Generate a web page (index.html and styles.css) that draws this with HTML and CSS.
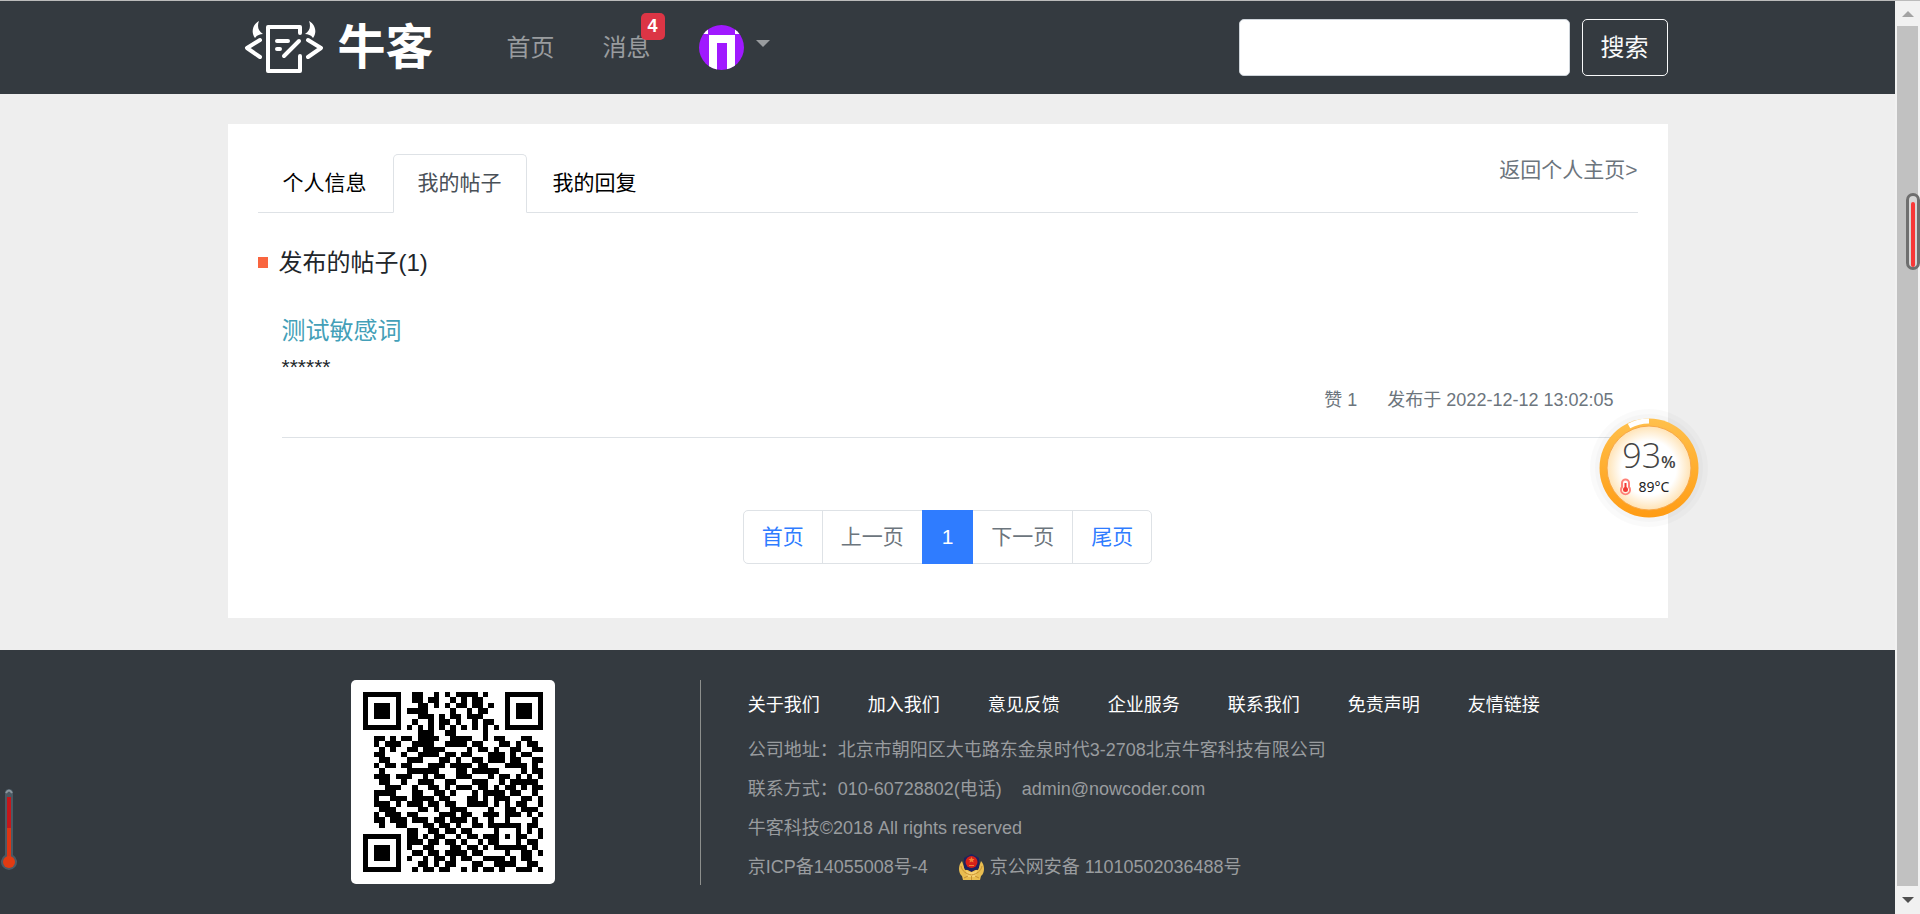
FILE: index.html
```html
<!DOCTYPE html>
<html lang="zh-CN">
<head>
<meta charset="utf-8">
<meta name="viewport" content="width=device-width, initial-scale=1">
<title>牛客 - 我的帖子</title>
<link rel="stylesheet" href="styles.css">
</head>
<body>
<div class="page">
  <header class="site-header">
    <div class="container header-row">
      <a class="brand" href="#">
        <svg class="brand-mark" viewBox="0 0 80 56" aria-hidden="true">
          <g fill="none" stroke="#fff" stroke-width="4" stroke-linecap="round" stroke-linejoin="round">
            <path d="M16 20 3 28l13 9M64 20l13 8-13 9"/>
            <path d="M56 13V7H24v44h32V36"/>
            <path d="M33 21h11M33 29h3M55 21 40 36"/>
          </g>
          <path fill="#fff" d="M15 1C8 5 7 13 11 18c2-3 5-4 8-4-5-3-6-8-4-13zM65 1c7 4 8 12 4 17-2-3-5-4-8-4 5-3 6-8 4-13z"/>
        </svg>
        <span class="brand-name">牛客</span>
      </a>
      <nav class="main-nav">
        <a href="#">首页</a>
        <a class="messages" href="#">消息<span class="badge">4</span></a>
        <button class="user-menu" type="button" aria-label="用户菜单">
          <svg class="avatar" viewBox="0 0 45 45" aria-hidden="true">
            <defs><clipPath id="round"><circle cx="22.5" cy="22.5" r="22.5"/></clipPath></defs>
            <g clip-path="url(#round)"><path fill="#a019ff" d="M0 0h45v45H0z"/><path fill="#fff" d="M0 0h9v9H0zM36 0h9v9h-9zM10 10h26v35h-8V18H18v27h-8z"/></g>
          </svg>
          <span class="caret"></span>
        </button>
      </nav>
      <form class="search">
        <input type="text" aria-label="搜索内容">
        <button type="button">搜索</button>
      </form>
    </div>
  </header>

  <main class="container card">
    <div class="tab-bar">
      <nav class="tabs">
        <a href="#">个人信息</a>
        <a class="active" href="#">我的帖子</a>
        <a href="#">我的回复</a>
      </nav>
      <a class="back" href="#">返回个人主页&gt;</a>
    </div>
    <h1 class="section-title">发布的帖子(1)</h1>
    <ul class="posts">
      <li>
        <a class="post-title" href="#">测试敏感词</a>
        <p class="post-text">******</p>
        <p class="post-meta"><span>赞 1</span><span>发布于 2022-12-12 13:02:05</span></p>
      </li>
    </ul>
    <nav class="pagination" aria-label="分页">
      <a href="#">首页</a>
      <span>上一页</span>
      <a class="current" href="#">1</a>
      <span>下一页</span>
      <a href="#">尾页</a>
    </nav>
  </main>

  <footer class="site-footer">
    <div class="container footer-row">
      <div class="qr-column">
        <svg class="qr" id="qr" viewBox="0 0 33 33" role="img" aria-label="二维码"></svg>
      </div>
      <div class="footer-info">
        <nav class="footer-links">
          <a href="#">关于我们</a><a href="#">加入我们</a><a href="#">意见反馈</a><a href="#">企业服务</a><a href="#">联系我们</a><a href="#">免责声明</a><a href="#">友情链接</a>
        </nav>
        <p>公司地址：北京市朝阳区大屯路东金泉时代3-2708北京牛客科技有限公司</p>
        <p class="contact"><span>联系方式：010-60728802(电话)</span><span>admin@nowcoder.com</span></p>
        <p>牛客科技©2018 All rights reserved</p>
        <p class="licence"><span>京ICP备14055008号-4</span>
          <span class="police">
            <svg viewBox="0 0 25 27" aria-hidden="true">
              <path fill="#e9bd50" d="M3 7C-1 11-1 19 3 22l1 4h17l1-4c4-3 4-11 0-15l-3 9H6z"/>
              <path fill="#1d2160" d="M5 4 12.500 0 20 4v10l-7.500 4L5 14z"/>
              <circle cx="12.5" cy="8" r="6" fill="#d62018"/>
              <path fill="#ef7f35" d="m12.500 3 1 2h2L14 6.500l.5 2-2-1-2 1 .5-2L9.500 5h2zM10 11h5v1h-5z"/>
              <path fill="#f6d070" d="M7 16c3 3 8 3 11 0l-1 7H8z"/>
              <path fill="none" stroke="#c8902f" d="M2 12c1 5 5 8 10.500 9 5.500-1 9.500-4 10.500-9M5 24l4-2M20 24l-4-2M12.500 22v4"/>
            </svg>
            京公网安备 11010502036488号</span></p>
      </div>
    </div>
  </footer>
</div>

<div class="scrollbar" aria-hidden="true">
  <span class="arrow up"></span><span class="thumb"></span><span class="arrow down"></span>
</div>

<div class="monitor">
  <svg viewBox="0 0 120 120" aria-hidden="true">
    <defs>
      <linearGradient id="ring" x2="0" y2="1"><stop offset="0" stop-color="#ffc04c"/><stop offset="1" stop-color="#ff9c14"/></linearGradient>
      <radialGradient id="face"><stop offset=".65" stop-color="#fff"/><stop offset="1" stop-color="#ffe3b5"/></radialGradient>
    </defs>
    <circle cx="60" cy="60" r="59" fill="#000" opacity=".02"/>
    <circle cx="60" cy="60" r="54" fill="#000" opacity=".02"/>
    <circle cx="60" cy="60" r="49.500" fill="url(#ring)"/>
    <circle cx="60" cy="60" r="42" fill="url(#face)" stroke="#f7a84a"/>
    <path fill="none" stroke="#fff" stroke-width="5" d="M40 18Q49 13 60 13"/>
    <g fill="none" stroke="#ff8078" stroke-width="2"><path d="M33 79v-4a3.500 3.500 0 0 1 7 0v4a4.500 4.500 0 1 1-7 0z"/><path stroke="#f03a35" d="M36.500 75v7"/></g>
    <circle cx="36.500" cy="81.500" r="2.500" fill="#f03a35"/>
  </svg>
  <p class="load">93<small>%</small></p>
  <p class="temp">89°C</p>
</div>
<svg class="gauge gauge-left" viewBox="0 0 18 84" aria-hidden="true">
  <path fill="#4c5963" d="M5 5a4 4 0 0 1 8 0v62a8 8 0 1 1-8 0z"/>
  <path fill="none" stroke="#8b969d" stroke-width="2" d="M6 5q3-5 6 0"/>
  <path fill="#c4161a" d="M7 9h4v32H7z"/><path fill="#dd3514" d="M7 40h4v30H7z"/><circle cx="9" cy="74" r="6" fill="#e23b12"/>
</svg>
<svg class="gauge gauge-right" viewBox="0 0 14 78" aria-hidden="true">
  <rect x="1.500" y="1.500" width="11" height="74" rx="5.500" fill="#d6d6d6" stroke="#6e6e6e" stroke-width="3"/>
  <rect x="5" y="9" width="4" height="65" rx="2" fill="#f83838"/>
</svg>
<script src="script.js"></script>
</body>
</html>
```

FILE: styles.css
```css
* { box-sizing: border-box; }
body {
  margin: 0;
  min-height: 100vh;
  display: flex;
  position: relative;
  background: #eee;
  color: #212529;
  border-top: 1px solid #bbb;
  font-family: "Liberation Sans", "Noto Sans CJK SC", sans-serif;
  font-size: 21px;
  line-height: 32px;
}
a { color: inherit; text-decoration: none; }
p, h1, ul { margin: 0; padding: 0; }
button, input { font: inherit; }

.page { flex: 1; display: flex; flex-direction: column; }
.container { width: 100%; max-width: 1440px; margin: 0 auto; }

.site-header { background: #343a40; }
.header-row { display: flex; align-items: center; padding: 18px 0; font-size: 24px; }
.brand { display: flex; align-items: center; gap: 14px; margin-left: 16px; color: #fff; }
.brand-mark { width: 80px; height: 56px; }
.brand-name { font-size: 48px; font-weight: 700; line-height: 56px; }
.main-nav { display: flex; align-items: center; gap: 48px; margin-left: 73px; color: #999c9f; }
.messages { position: relative; }
.badge {
  position: absolute; left: 38px; top: -19px;
  padding: 0 7px; border-radius: 5px;
  background: #dc3545; color: #fff;
  font-size: 18px; font-weight: 700; line-height: 27px;
}
.user-menu { display: flex; align-items: center; gap: 12px; padding: 0; border: 0; background: none; color: inherit; }
.avatar { width: 45px; height: 45px; }
.caret { border: 7px solid transparent; border-top-color: currentColor; border-bottom: 0; margin-bottom: 8px; }
.search { display: flex; gap: 12px; margin-left: auto; }
.search input { width: 331px; height: 57px; padding: 8px 16px; border: 1px solid #ced4da; border-radius: 5px; background: #fff; }
.search button { height: 57px; padding: 0 18px; border: 1px solid #f8f9fa; border-radius: 5px; background: none; color: #f8f9fa; line-height: 32px; }

.card { margin-top: 30px; padding: 30px 30px 54px; background: #fff; }
.tab-bar { display: flex; justify-content: space-between; border-bottom: 1px solid #dee2e6; }
.tabs { display: flex; gap: 1px; }
.tabs a { margin-bottom: -1px; padding: 12px 24px 13px; border: 1px solid transparent; color: #000; }
.tabs .active { border-color: #dee2e6 #dee2e6 #fff; border-radius: 5px 5px 0 0; background: #fff; color: #495057; }
.back { color: #6c757d; }
.section-title { display: flex; align-items: center; gap: 11px; margin-top: 34px; font-size: 24px; font-weight: 400; }
.section-title::before { content: ""; width: 10px; height: 11px; margin-bottom: 2px; background: #f9653f; }
.posts { margin: 36px 24px 0; list-style: none; }
.posts li { padding-bottom: 23px; border-bottom: 1px solid #dee2e6; }
.post-title { display: block; font-size: 24px; color: #449fb8; }
.post-text { margin-top: 8px; line-height: 24px; }
.post-meta { display: flex; justify-content: flex-end; gap: 30px; margin-top: 7px; font-size: 18px; line-height: 28px; color: #6c757d; }
.pagination { display: flex; justify-content: center; margin-top: 72px; }
.pagination > * { margin-left: -1px; padding: 10px 18px; border: 1px solid #dee2e6; color: #6c757d; }
.pagination a { color: #2f7cff; }
.pagination > :first-child { margin-left: 0; border-radius: 5px 0 0 5px; }
.pagination > :last-child { border-radius: 0 5px 5px 0; }
.pagination .current { position: relative; padding: 10px 19px; border-color: #2f7cff; background: #2f7cff; color: #fff; }

.site-footer { flex: 1; margin-top: 32px; padding: 30px 0 20px; background: #343a40; color: #999c9f; font-size: 18px; }
.footer-row { display: flex; }
.qr-column { width: 33%; padding-left: 123px; }
.qr { display: block; width: 204px; height: 204px; padding: 12px; border-radius: 5px; background: #fff; }
.footer-info { flex: 1; margin-left: -3px; padding: 12px 0 4px 47px; border-left: 1px solid #8d8f8d; line-height: 27px; }
.footer-info p + p { margin-top: 12px; }
.footer-links { display: flex; gap: 48px; margin-bottom: 18px; color: #fff; }
.contact { display: flex; gap: 20px; }
.licence { display: flex; gap: 31px; }
.police { display: flex; align-items: center; gap: 6px; }
.police svg { width: 25px; height: 27px; }

.scrollbar { width: 25px; display: flex; flex-direction: column; align-items: center; background: #f1f1f1; }
.thumb { flex: 1; width: 21px; background: #c1c1c1; }
.arrow { display: flex; align-items: center; justify-content: center; height: 25px; }
.arrow::before { content: ""; border: 6px solid transparent; }
.up::before { border-top: 0; border-bottom-color: #a3a3a3; }
.down { height: 28px; }
.down::before { border-bottom: 0; border-top-color: #505050; }

.monitor { position: absolute; left: 1589px; top: 407px; width: 120px; height: 120px; padding-top: 30px; text-align: center; color: #444; }
.monitor svg { position: absolute; inset: 0; }
.load { position: relative; height: 34px; font: 300 34px/34px "Open Sans", sans-serif; }
.load small { font-size: 17px; font-weight: 600; line-height: 17px; }
.temp { position: relative; padding: 6px 0 0 10px; font: 14px/18px "Noto Sans", sans-serif; color: #222; }
.gauge { position: absolute; }
.gauge-left { left: 0; top: 787px; width: 18px; height: 84px; }
.gauge-right { right: 0; top: 192px; width: 14px; height: 78px; }
```

FILE: script.js
```js
const rows = [
  "111111100110010101111010001111111",
  "100000100110110010101100001000001",
  "101110100011010101101101001011101",
  "101110101111000010010110001011101",
  "101110100011101011011100001011101",
  "100000100100101101001011001000001",
  "111111101010101010101010101111111",
  "000000000011100110000010000000000",
  "001101011011110011110010110001100",
  "001011100111100111101100011010110",
  "000101001101111000010110100110011",
  "001100010011110110110001110101100",
  "000110001110001101001101110110011",
  "001011011000111011110110001111010",
  "000100001111110001101111100001011",
  "001110111001011001110001011010101",
  "000110010011100110001110010111110",
  "000011100100110101110110101101011",
  "001111000110011010001011110110010",
  "001001110111101100011010111001101",
  "001110101110110110011110101011001",
  "000111000011010011100001001101110",
  "001011101100001110110011101110101",
  "001101110111011011101001001000010",
  "000100110001101101001101111110110",
  "000000001100110110110000100010101",
  "111111101101011001011011101011001",
  "100000101110110110100101100010110",
  "101110101001100011011010111111010",
  "101110100110110111101100001001101",
  "101110101001011010110011110101100",
  "100000100011010110001100111100110",
  "111111100101101100101011010011101"
];
const path = document.createElementNS("http://www.w3.org/2000/svg", "path");
path.setAttribute("d", rows.map((row, y) =>
  [...row.matchAll(/1+/g)].map(m => `M${m.index} ${y}h${m[0].length}v1h-${m[0].length}z`).join("")
).join(""));
path.setAttribute("shape-rendering", "crispEdges");
document.getElementById("qr").append(path);
```
